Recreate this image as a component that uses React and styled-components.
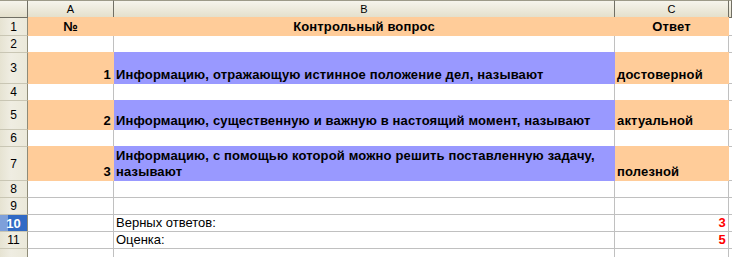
import React from 'react';
import styled, { createGlobalStyle } from 'styled-components';

const GlobalStyle = createGlobalStyle`
	html, body {
		margin: 0;
		padding: 0;
		background: #ffffff;
	}
	body {
		font-family: 'Liberation Sans', Arial, sans-serif;
	}
`;

const ORANGE = '#ffcc99';
const VIOLET = '#9999ff';
const GRID = '#c0c0c0';

const rows = [
	{ n: 1, h: 18, cells: [{ text: '№', bg: ORANGE, bold: true, align: 'center' }, { text: 'Контрольный вопрос', bg: ORANGE, bold: true, align: 'center' }, { text: 'Ответ', bg: ORANGE, bold: true, align: 'center' }] },
	{ n: 2, h: 17, cells: [{}, {}, {}] },
	{ n: 3, h: 31, cells: [{ text: '1', bg: ORANGE, bold: true, align: 'right' }, { text: 'Информацию, отражающую истинное положение дел, называют', bg: VIOLET, bold: true }, { text: 'достоверной', bg: ORANGE, bold: true }] },
	{ n: 4, h: 17, cells: [{}, {}, {}] },
	{ n: 5, h: 29, cells: [{ text: '2', bg: ORANGE, bold: true, align: 'right' }, { text: 'Информацию, существенную и важную в настоящий момент, называют', bg: VIOLET, bold: true }, { text: 'актуальной', bg: ORANGE, bold: true }] },
	{ n: 6, h: 17, cells: [{}, {}, {}] },
	{ n: 7, h: 34, cells: [{ text: '3', bg: ORANGE, bold: true, align: 'right' }, { text: 'Информацию, с помощью которой можно решить поставленную задачу, называют', bg: VIOLET, bold: true }, { text: 'полезной', bg: ORANGE, bold: true }] },
	{ n: 8, h: 17, cells: [{}, {}, {}] },
	{ n: 9, h: 17, cells: [{}, {}, {}] },
	{ n: 10, h: 17, active: true, cells: [{}, { text: 'Верных ответов:' }, { text: '3', bold: true, align: 'right', color: '#ff0000' }] },
	{ n: 11, h: 17, cells: [{}, { text: 'Оценка:' }, { text: '5', bold: true, align: 'right', color: '#ff0000' }] },
	{ n: 12, h: 17, hidden: true, cells: [{}, {}, {}] },
];

const justify = { left: 'flex-start', center: 'center', right: 'flex-end' };

export default function App() {
	return (
		<>
			<GlobalStyle />
			<Sheet>
				<Row $h={18}>
					<Corner />
					<ColHead>A</ColHead>
					<ColHead>B</ColHead>
					<ColHead>C</ColHead>
					<ColHead />
				</Row>
				{rows.map((row) => (
					<Row key={row.n} $h={row.h}>
						<RowHead $active={row.active}>{row.hidden ? '' : row.n}</RowHead>
						{row.cells.map((c, i) => (
							<Cell key={i} $bg={c.bg} $bold={c.bold} $align={c.align} $color={c.color}>
								<span>{c.text}</span>
							</Cell>
						))}
						<Cell />
					</Row>
				))}
			</Sheet>
		</>
	);
}

const Sheet = styled.div`
	width: 732px;
	height: 257px;
	overflow: hidden;
	background: #ffffff;
`;

const Row = styled.div`
	display: grid;
	grid-template-columns: 28px 86px 501px 114px 1fr;
	height: ${(p) => p.$h}px;
`;

const Corner = styled.div`
	box-sizing: border-box;
	border-top: 1px solid #9d9a88;
	border-right: 1px solid #716f64;
	border-bottom: 1px solid #716f64;
	background: linear-gradient(#f6f4ec, #e4e0cc);
`;

const ColHead = styled.div`
	box-sizing: border-box;
	border-top: 1px solid #9d9a88;
	border-right: 1px solid #716f64;
	border-bottom: 1px solid #716f64;
	background: linear-gradient(#f6f4ec, #e4e0cc);
	display: flex;
	align-items: center;
	justify-content: center;
	font-size: 11px;
	color: #000000;
`;

const RowHead = styled.div`
	box-sizing: border-box;
	border-right: 1px solid #8e8b78;
	border-bottom: 1px solid #c9c6b4;
	background: ${(p) => (p.$active ? 'linear-gradient(to right, #7ea0da 0 8px, #316ac5 8px)' : 'linear-gradient(to right, #e6e3d2, #efede2 40%, #ebe9da)')};
	color: ${(p) => (p.$active ? '#ffffff' : '#000000')};
	font-weight: ${(p) => (p.$active ? 700 : 400)};
	display: flex;
	align-items: center;
	justify-content: center;
	font-size: ${(p) => (p.$active ? 13 : 12)}px;
`;

const Cell = styled.div`
	box-sizing: border-box;
	min-width: 0;
	border-right: 1px solid ${(p) => p.$bg || GRID};
	border-bottom: 1px solid ${(p) => p.$bg || GRID};
	background: ${(p) => p.$bg || '#ffffff'};
	box-shadow: ${(p) => (p.$bg ? `0 -1px 0 ${p.$bg}` : 'none')};
	display: flex;
	align-items: flex-end;
	justify-content: ${(p) => justify[p.$align || 'left']};
	padding: 0 2px 0 2px;
	font-size: 13px;
	line-height: 16px;
	font-weight: ${(p) => (p.$bold ? 700 : 400)};
	letter-spacing: ${(p) => (p.$bold ? '0.15px' : '0')};
	color: ${(p) => p.$color || '#000000'};
	white-space: normal;
	overflow: hidden;
`;
